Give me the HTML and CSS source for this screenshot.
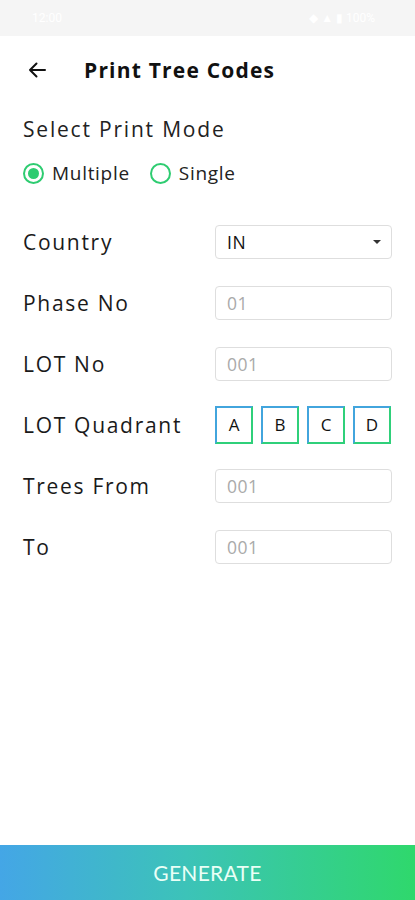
FILE: index.html
```html
<!DOCTYPE html>
<html>
<head>
<meta charset="utf-8">
<link rel="stylesheet" href="styles.css">
</head>
<body>
<div class="screen">
  <div class="status"><span class="time">12:00</span><span class="icons">◆ ▲ ▮ 100%</span></div>
  <div class="header">
    <svg class="back" width="20" height="20" viewBox="0 0 20 20"><path d="M18 10H3M9.5 3.5L3 10l6.5 6.5" fill="none" stroke="#111" stroke-width="2" stroke-linecap="round" stroke-linejoin="round"/></svg>
    <div class="title">Print Tree Codes</div>
  </div>
  <div class="content">
    <div class="mode-label">Select Print Mode</div>
    <div class="radios">
      <div class="radio"><span class="circle on"></span><span>Multiple</span></div>
      <div class="radio"><span class="circle"></span><span>Single</span></div>
    </div>
    <div class="form">
      <div class="row"><div class="label">Country</div><div class="field select"><span class="val">IN</span><span class="caret"></span></div></div>
      <div class="row"><div class="label">Phase No</div><div class="field"><span class="ph">01</span></div></div>
      <div class="row"><div class="label">LOT No</div><div class="field"><span class="ph">001</span></div></div>
      <div class="row"><div class="label">LOT Quadrant</div><div class="quads"><span class="q">A</span><span class="q">B</span><span class="q">C</span><span class="q">D</span></div></div>
      <div class="row"><div class="label">Trees From</div><div class="field"><span class="ph">001</span></div></div>
      <div class="row"><div class="label">To</div><div class="field"><span class="ph">001</span></div></div>
    </div>
  </div>
  <div class="generate">GENERATE</div>
</div>
</body>
</html>
```
FILE: styles.css
```css
* { box-sizing: border-box; }
html, body { margin: 0; padding: 0; background: #fff; }
.screen {
  width: 415px; height: 900px; display: flex; flex-direction: column;
  font-family: "Open Sans", "Liberation Sans", sans-serif; color: #1a1a1a;
}
.status {
  height: 36px; background: #f5f5f5; display: flex; justify-content: space-between;
  align-items: center; padding: 0 40px 0 32px; color: #fff; font-size: 12px; font-family: Roboto, sans-serif;
}
.header { height: 68px; display: flex; align-items: center; padding-left: 27px; }
.back { margin-top: -1px; }
.title { margin-left: 37px; font-size: 21px; font-weight: 700; letter-spacing: 1.2px; color: #111; margin-top: -1px; }
.content { flex: 1; padding: 0 23px; }
.mode-label { font-size: 21px; margin-top: 10px; line-height: 30px; color: #222; letter-spacing: 1.8px; }
.radios { display: flex; align-items: center; margin-top: 14px; height: 30px; }
.radio { display: flex; align-items: center; font-size: 19px; color: #222; margin-right: 20px; letter-spacing: 0.7px; }
.circle {
  width: 21px; height: 21px; border-radius: 50%; border: 2px solid #2ecc71; margin-right: 8px; position: relative; flex: none;
}
.circle.on::after {
  content: ""; position: absolute; left: 3px; top: 3px; width: 11px; height: 11px; border-radius: 50%; background: #2ecc71;
}
.form { margin-top: 36px; display: flex; flex-direction: column; gap: 26px; }
.row { display: flex; align-items: center; height: 35px; }
.label { width: 192px; font-size: 21px; color: #1a1a1a; letter-spacing: 1.7px; }
.field {
  width: 177px; height: 34px; border: 1.5px solid #dedede; border-radius: 4px; display: flex; align-items: center;
  padding: 0 11px; font-size: 17.5px; justify-content: space-between; letter-spacing: 0.5px;
}
.ph { color: #aaa; }
.val { color: #111; }
.caret { width: 0; height: 0; border-left: 4px solid transparent; border-right: 4px solid transparent; border-top: 4px solid #333; margin-right: -1px; }
.quads { display: flex; gap: 8px; }
.q {
  width: 38px; height: 38px; display: flex; align-items: center; justify-content: center; font-size: 17px; color: #111;
  border: 2px solid #42a5dd; border-right-color: #2fd07a; border-bottom-color: #2fd07a;
}
.generate {
  height: 55px; background: linear-gradient(90deg, #44a6e6 0%, #3cc3b8 45%, #2fd86c 100%);
  color: #eafff6; display: flex; align-items: center; justify-content: center;
  font-family: Lato, sans-serif; font-size: 21px; letter-spacing: 0.3px;
}
```
